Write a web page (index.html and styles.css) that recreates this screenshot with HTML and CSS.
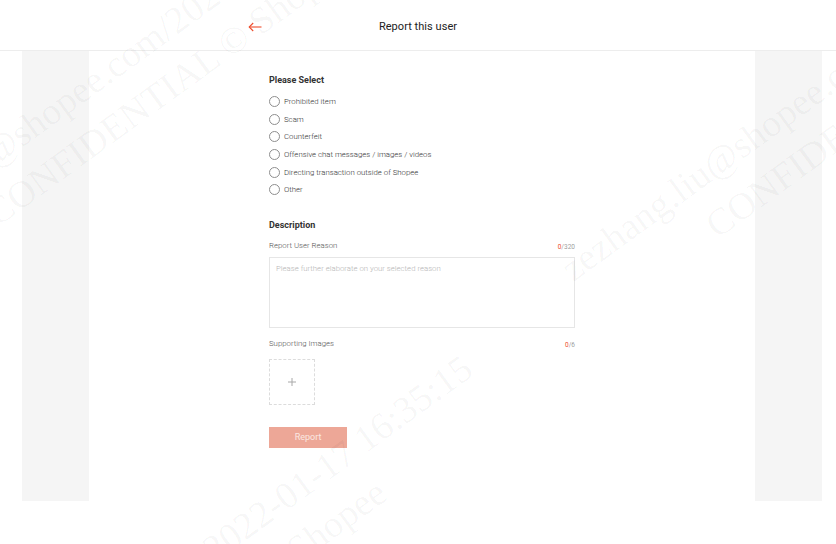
FILE: index.html
```html
<!DOCTYPE html>
<html lang="en">
<head>
<meta charset="utf-8">
<title>Report this user</title>
<link rel="stylesheet" href="styles.css">
</head>
<body>
<header class="topbar">
  <div class="topbar-inner">
    <button class="back" type="button" aria-label="Back">
      <svg width="14" height="10" viewBox="0 0 14 10" fill="none" stroke="#ee4d2d" stroke-width="1.1">
        <path d="M13.5 5H1.2"/>
        <path d="M5.2 1L1.2 5l4 4"/>
      </svg>
    </button>
    <h1 class="title">Report this user</h1>
    <span class="spacer"></span>
  </div>
</header>

<main class="page">
  <section class="panel">
    <form class="form">
      <h2 class="section-title">Please Select</h2>
      <ul class="options">
        <li class="option"><span class="radio"></span><span class="option-label">Prohibited item</span></li>
        <li class="option"><span class="radio"></span><span class="option-label">Scam</span></li>
        <li class="option"><span class="radio"></span><span class="option-label">Counterfeit</span></li>
        <li class="option"><span class="radio"></span><span class="option-label">Offensive chat messages / images / videos</span></li>
        <li class="option"><span class="radio"></span><span class="option-label">Directing transaction outside of Shopee</span></li>
        <li class="option"><span class="radio"></span><span class="option-label">Other</span></li>
      </ul>

      <h2 class="section-title desc-title">Description</h2>
      <div class="field-head">
        <span class="field-label">Report User Reason</span>
        <span class="count"><em>0</em>/320</span>
      </div>
      <textarea class="reason" placeholder="Please further elaborate on your selected reason"></textarea>

      <div class="field-head images-head">
        <span class="field-label">Supporting Images</span>
        <span class="count"><em>0</em>/6</span>
      </div>
      <div class="upload">
        <svg width="8" height="8" viewBox="0 0 8 8" stroke="#a8a8a8" stroke-width="1"><path d="M4 0v8M0 4h8"/></svg>
      </div>

      <button class="submit" type="button">Report</button>
    </form>
  </section>
</main>

<div class="watermarks" aria-hidden="true">
  <div class="wm wm-a">zezhang.liu@shopee.com/2022-01-17 16:35:15<br>CONFIDENTIAL © Shopee</div>
  <div class="wm wm-b">zezhang.liu@shopee.com/2022-01-17 16:35:15<br>CONFIDENTIAL © Shopee</div>
  <div class="wm wm-c">zezhang.liu@shopee.com/2022-01-17 16:35:15<br>CONFIDENTIAL © Shopee</div>
</div>
</body>
</html>
```

FILE: styles.css
```css
* { box-sizing: border-box; }

html, body {
  margin: 0;
  padding: 0;
  background: #fff;
}

body {
  font-family: Roboto, "Liberation Sans", Arial, sans-serif;
  color: #333;
  width: 836px;
  height: 544px;
  position: relative;
  overflow: hidden;
}

/* Header */
.topbar {
  height: 51px;
  border-bottom: 1px solid #ededed;
  display: flex;
  justify-content: center;
  padding-top: 3px;
}

.topbar-inner {
  width: 340px;
  display: grid;
  grid-template-columns: 1fr auto 1fr;
  align-items: center;
}

.back {
  justify-self: start;
  background: none;
  border: 0;
  padding: 0;
  width: 14px;
  height: 10px;
  display: flex;
  cursor: pointer;
}

.title {
  margin: 0;
  font-size: 11px;
  font-weight: 400;
  color: #222;
  letter-spacing: 0.05px;
}

/* Page */
.page {
  margin-left: 22px;
  width: 800px;
  height: 450px;
  background: #f5f5f5;
  display: flex;
  justify-content: center;
}

.panel {
  width: 666px;
  background: #fff;
  display: flex;
  justify-content: center;
}

.form {
  width: 306px;
  padding-top: 23px;
  display: flex;
  flex-direction: column;
  align-items: flex-start;
}

.section-title {
  margin: 0;
  font-size: 9px;
  line-height: 12px;
  font-weight: 700;
  color: #333;
}

.options {
  list-style: none;
  margin: 7px 0 0;
  padding: 0;
}

.option {
  height: 17.6px;
  display: flex;
  align-items: center;
  gap: 4px;
}

.radio {
  width: 11px;
  height: 11px;
  border: 1px solid #8e8e8e;
  border-radius: 50%;
  flex: none;
}

.option-label {
  font-size: 7.8px;
  font-weight: 300;
  color: #333;
}

.desc-title {
  margin-top: 20px;
}

.field-head {
  width: 100%;
  margin-top: 9px;
  height: 12px;
  display: flex;
  justify-content: space-between;
  align-items: center;
}

.field-label {
  font-size: 7.8px;
  font-weight: 300;
  color: #555;
}

.count {
  font-size: 6.5px;
  color: #a0a0a0;
  padding-top: 2px;
}

.count em {
  font-style: normal;
  color: #ee4d2d;
}

.reason {
  display: block;
  margin-top: 5px;
  width: 306px;
  height: 71px;
  border: 1px solid #e6e6e6;
  border-radius: 0;
  padding: 6px 6px;
  resize: none;
  font-family: Roboto, "Liberation Sans", Arial, sans-serif;
  font-size: 7.8px;
  font-weight: 300;
  line-height: 10px;
  color: #333;
  outline: none;
}

.reason::placeholder {
  color: #b5b5b5;
}

.images-head {
  margin-top: 10px;
}

.upload {
  margin-top: 9px;
  width: 46px;
  height: 46px;
  border: 1px dashed #dcdcdc;
  display: flex;
  align-items: center;
  justify-content: center;
}

.submit {
  margin-top: 22px;
  width: 78px;
  height: 21px;
  border: 0;
  border-radius: 0;
  background: #eda797;
  color: #fbe7e2;
  font-family: Roboto, "Liberation Sans", Arial, sans-serif;
  font-size: 9px;
  padding: 0;
}

/* Watermarks (overlay) */
.watermarks {
  position: absolute;
  inset: 0;
  overflow: hidden;
  pointer-events: none;
}

.wm {
  position: absolute;
  transform: translate(-50%, -50%) rotate(-36deg);
  font-family: "Liberation Serif", "Times New Roman", serif;
  font-size: 38px;
  line-height: 50px;
  white-space: nowrap;
  text-align: center;
  color: rgba(0, 0, 0, 0.04);
}

.wm-a { left: 152px; top: 68px; }
.wm-b { left: 872px; top: 80px; }
.wm-c { left: 190px; top: 596px; }
```
